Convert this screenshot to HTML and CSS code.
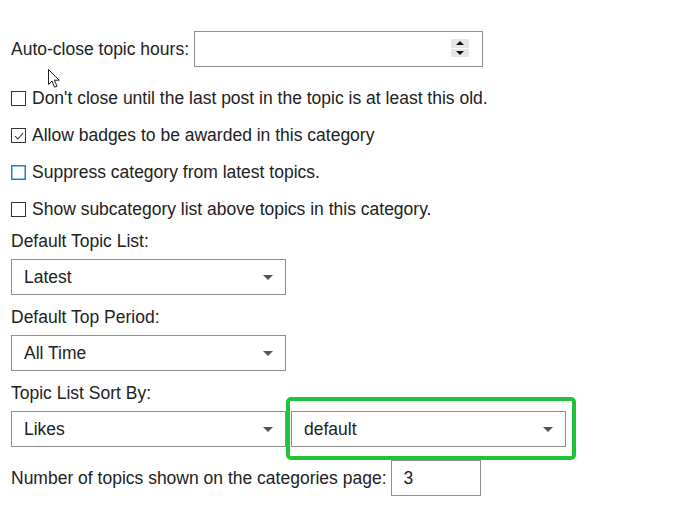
FILE: index.html
```html
<!DOCTYPE html>
<html lang="en">
<head>
    <meta charset="UTF-8">
    <title>Category Settings</title>
    <link rel="stylesheet" href="styles.css">
</head>
<body>
    <div class="settings">

        <div class="field-inline">
            <label for="auto-close">Auto-close topic hours:</label>
            <div class="num-box">
                <input id="auto-close" class="num-input" type="text">
                <span class="spinner"><span class="up"></span><span class="down"></span></span>
            </div>
        </div>

        <div class="checks">
            <label class="check"><span class="box"></span>Don't close until the last post in the topic is at least this old.</label>
            <label class="check"><span class="box checked"><svg width="12" height="12" viewBox="0 0 12 12"><path d="M2 6.2 L4.8 9 L10.2 3" fill="none" stroke="#333" stroke-width="1.1"/></svg></span>Allow badges to be awarded in this category</label>
            <label class="check"><span class="box box-focused"></span>Suppress category from latest topics.</label>
            <label class="check"><span class="box"></span>Show subcategory list above topics in this category.</label>
        </div>

        <div class="group">
            <div class="group-label">Default Topic List:</div>
            <div class="select">Latest</div>
        </div>

        <div class="group">
            <div class="group-label">Default Top Period:</div>
            <div class="select">All Time</div>
        </div>

        <div class="group">
            <div class="group-label">Topic List Sort By:</div>
            <div class="select-row">
                <div class="select">Likes</div>
                <div class="select">default</div>
            </div>
        </div>

        <div class="field-inline count-row">
            <label for="num-topics">Number of topics shown on the categories page:</label>
            <input id="num-topics" class="small-input" type="text" value="3">
        </div>

        <!-- highlight around the sort order dropdown -->
        <div class="highlight"></div>

        <svg class="pointer" width="14" height="20" viewBox="0 0 14 20">
            <path d="M0.5 0.5 L0.5 15.5 L4 12 L6.6 18.2 L9 17.2 L6.4 11.2 L11.2 11.2 Z" fill="#fff" stroke="#222" stroke-width="1"/>
        </svg>
    </div>
</body>
</html>
```

FILE: styles.css
```css
* {
    margin: 0;
    padding: 0;
    box-sizing: border-box;
}

body {
    background-color: #fff;
    font-family: "Liberation Sans", Arial, sans-serif;
    font-size: 17.5px;
    color: #222;
}

.settings {
    position: relative;
    display: flex;
    flex-direction: column;
    padding: 31px 0 20px 11px;
}

.field-inline {
    display: flex;
    align-items: center;
    gap: 5px;
}

.num-box {
    position: relative;
    width: 289px;
    height: 36px;
    border: 1px solid #8f8f8f;
}

.num-input {
    width: 100%;
    height: 100%;
    border: none;
    outline: none;
    font: inherit;
}

.spinner {
    position: absolute;
    top: 7px;
    right: 13px;
    width: 18px;
    height: 18px;
    background-color: #e6e6e6;
    display: flex;
    flex-direction: column;
}

.spinner span {
    flex: 1;
    position: relative;
}

.spinner .up {
    border-bottom: 1px solid #fff;
}

.spinner .up::after,
.spinner .down::after {
    content: "";
    position: absolute;
    left: 5px;
    border-left: 4px solid transparent;
    border-right: 4px solid transparent;
}

.spinner .up::after {
    top: 2px;
    border-bottom: 4px solid #111;
}

.spinner .down::after {
    top: 2px;
    border-top: 4px solid #111;
}

.checks {
    margin-top: 13px;
    margin-bottom: 3px;
}

.check {
    display: flex;
    align-items: center;
    height: 37px;
}

.box {
    width: 15px;
    height: 15px;
    border: 1px solid #333;
    margin-right: 6px;
    display: flex;
    align-items: center;
    justify-content: center;
    flex-shrink: 0;
}

.check .box-focused {
    border: 1px solid #1a7fd9;
    box-shadow: inset 0 0 0 0.5px #1a7fd9;
}

.group + .group {
    margin-top: 12px;
}

.group-label {
    height: 20px;
    line-height: 20px;
    margin-bottom: 8px;
}

.select {
    position: relative;
    width: 275px;
    height: 36px;
    line-height: 34px;
    padding-left: 12px;
    border: 1px solid #8f8f8f;
    color: #222;
}

.select::after {
    content: "";
    position: absolute;
    right: 12px;
    top: 15px;
    border-left: 5px solid transparent;
    border-right: 5px solid transparent;
    border-top: 5px solid #555;
}

.select-row {
    display: flex;
    gap: 5px;
}

.count-row {
    margin-top: 13px;
    gap: 4px;
}

.small-input {
    width: 90px;
    height: 36px;
    border: 1px solid #8f8f8f;
    padding-left: 12px;
    font: inherit;
    color: #222;
    outline: none;
}

.highlight {
    position: absolute;
    left: 286px;
    top: 397px;
    width: 290px;
    height: 63px;
    border: 4px solid #1ec338;
    border-radius: 5px;
}

.pointer {
    position: absolute;
    left: 48px;
    top: 69px;
}
```
